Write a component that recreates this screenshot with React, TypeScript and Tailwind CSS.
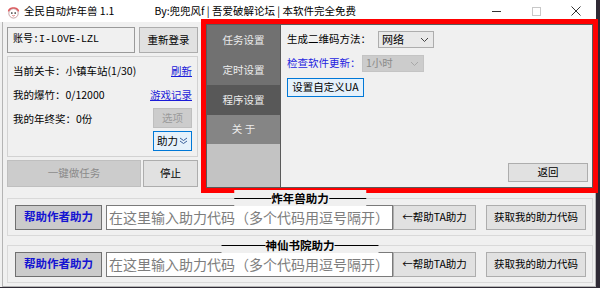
import React from "react";

const Face = () => (
	<svg width="15" height="15" viewBox="0 0 16 16">
		<path d="M2 8 C2 2 14 2 14 8 Z" fill="#e2575b" />
		<circle cx="8" cy="10" r="5" fill="#fff" stroke="#b5858a" strokeWidth="0.8" />
		<circle cx="6.2" cy="9.6" r="0.9" fill="#222" />
		<circle cx="9.8" cy="9.6" r="0.9" fill="#222" />
		<path d="M6.8 12.2 Q8 13.2 9.2 12.2" stroke="#c33" strokeWidth="0.8" fill="none" />
	</svg>
);

const Chevron = ({ color }: { color: string }) => (
	<svg width="9" height="6" viewBox="0 0 9 6">
		<path d="M1 1 L4.5 4.5 L8 1" stroke={color} strokeWidth="1" fill="none" />
	</svg>
);

const DoubleDown = () => (
	<svg width="9" height="8" viewBox="0 0 9 8">
		<path d="M1 1 L4.5 3.5 L8 1 M1 4 L4.5 6.5 L8 4" stroke="#3a5f9a" strokeWidth="1" fill="none" />
	</svg>
);

const tabs = [
	{ label: "任务设置", cls: "bg-[#717171] h-[30px]" },
	{ label: "定时设置", cls: "bg-[#717171] h-[30px]" },
	{ label: "程序设置", cls: "bg-[#585858] h-[30px]" },
	{ label: "关 于", cls: "bg-[#858585] h-[29px]" },
];

const HelpGroup = ({ title, dash }: { title: string; dash: string }) => (
	<div className="relative w-[586px] h-[38px] border border-[#d9d9d9] flex items-center pl-[7px]">
		<div className="absolute -top-[9px] left-1/2 -translate-x-1/2 flex items-center bg-[#f0f0f0] leading-[16px] font-bold text-[11.5px]">
			<span className={`inline-block h-px bg-black ${dash}`}></span>
			<span>{title}</span>
			<span className={`inline-block h-px bg-black ${dash}`}></span>
		</div>
		<button className="w-[87px] h-[25px] bg-[#cbcbcb] border border-[#707070] text-[#1414d2] font-bold text-[11.5px]">
			帮助作者助力
		</button>
		<input
			className="ml-[4px] w-[287px] h-[25px] bg-white border border-[#7a7a7a] px-[2px] text-[14px] placeholder:text-[#7d7d7d] outline-none"
			placeholder="在这里输入助力代码（多个代码用逗号隔开）"
		/>
		<button className="w-[83px] h-[25px] bg-[#e1e1e1] border border-[#adadad]">←帮助TA助力</button>
		<button className="ml-[10px] w-[100px] h-[25px] bg-[#e1e1e1] border border-[#adadad]">获取我的助力代码</button>
	</div>
);

export default function App() {
	return (
		<div className="relative w-[600px] h-[288px] bg-[#2f2a35] overflow-hidden font-['Noto_Sans_CJK_SC',sans-serif] text-[10.5px] text-black leading-none">
			<div className="w-[596px] h-[287px] bg-[#f0f0f0] flex flex-col">
				{/* title bar */}
				<div className="h-[22px] shrink-0 bg-white flex items-center">
					<div className="w-[24px] flex justify-center pl-[2px]">
						<Face />
					</div>
					<span>全民自动炸年兽 1.1</span>
					<span className="ml-[40px]">By:兜兜风f | 吾爱破解论坛 | 本软件完全免费</span>
					<div className="ml-auto flex h-full">
						<div className="w-[40px] flex items-center justify-center">
							<span className="block w-[9px] h-px bg-[#333]"></span>
						</div>
						<div className="w-[40px] flex items-center justify-center">
							<span className="block w-[9px] h-[9px] border border-[#c8c8c8]"></span>
						</div>
						<div className="w-[40px] flex items-center justify-center">
							<svg width="10" height="10" viewBox="0 0 10 10">
								<path d="M0.5 0.5 L9.5 9.5 M9.5 0.5 L0.5 9.5" stroke="#333" strokeWidth="1" />
							</svg>
						</div>
					</div>
				</div>

				{/* body */}
				<div className="flex-1 ml-[2px] w-[594px] border-x border-b border-[#b4b4b4] pl-[4px] pt-[5px]">
					<div className="flex items-start">
						{/* left column */}
						<div className="w-[191px] shrink-0 flex flex-col">
							<div className="flex h-[26px] gap-[4px]">
								<div className="w-[128px] border border-[#9a9a9a] flex items-center pl-[5px] font-['Liberation_Mono','Noto_Sans_CJK_SC',monospace] text-[10px]">
									账号:I-LOVE-LZL
								</div>
								<button className="w-[59px] bg-[#e1e1e1] border border-[#adadad]">重新登录</button>
							</div>
							<div className="mt-[3px] h-[101px] border border-[#d2d2d2] flex flex-col pl-[5px] pr-[5px]">
								<div className="mt-[9px] flex items-center justify-between">
									<span>当前关卡：小镇车站(1/30)</span>
									<span className="text-[#1b1bd8] underline">刷新</span>
								</div>
								<div className="mt-[13px] flex items-center justify-between">
									<span>我的爆竹：0/12000</span>
									<span className="text-[#1b1bd8] underline">游戏记录</span>
								</div>
								<div className="mt-[8px] flex items-center justify-between">
									<span className="mt-[2px]">我的年终奖：0份</span>
									<button className="w-[39px] h-[20px] bg-[#cccccc] border border-[#bfbfbf] text-[#9a9a9a]">选项</button>
								</div>
								<div className="mt-[3px] flex justify-end">
									<button className="w-[39px] h-[20px] bg-[#e5f1fb] border border-[#0078d7] flex items-center justify-center gap-[1px]">
										助力
										<DoubleDown />
									</button>
								</div>
							</div>
							<div className="mt-[3px] flex h-[27px] gap-[2px]">
								<button className="w-[134px] bg-[#cccccc] border border-[#bfbfbf] text-[#8a8a8a]">一键做任务</button>
								<button className="w-[55px] bg-[#e1e1e1] border border-[#adadad]">停止</button>
							</div>
						</div>

						{/* settings panel (highlighted) */}
						<div className="ml-[3px] -mt-[8px] w-[397px] h-[174px] shrink-0 border-[5px] border-[#ff0000]">
							<div className="w-full h-full border border-[#5a5a5a] flex">
								<div className="w-[74px] flex flex-col border-r border-[#5a5a5a] bg-[#c3c3c3]">
									{tabs.map((t) => (
										<div key={t.label} className={`${t.cls} flex items-center justify-center text-[#ececec]`}>
											{t.label}
										</div>
									))}
								</div>
								<div className="flex-1 bg-[#f0f0f0] flex flex-col pl-[6px] pt-[6px]">
									<div className="flex items-center h-[17px]">
										<span className="w-[91px]">生成二维码方法：</span>
										<div className="w-[56px] h-[17px] bg-[#e9e9e9] border border-[#adadad] flex items-center justify-between pl-[3px] pr-[4px] text-[11px]">
											网络
											<Chevron color="#444" />
										</div>
									</div>
									<div className="mt-[7px] flex items-center h-[17px]">
										<span className="w-[75px] text-[#1f1fe0]">检查软件更新：</span>
										<div className="w-[62px] h-[17px] bg-[#cccccc] border border-[#c4c4c4] flex items-center justify-between pl-[3px] pr-[4px] text-[#8a8a8a]">
											1小时
											<Chevron color="#a8a8a8" />
										</div>
									</div>
									<button className="mt-[6px] w-[77px] h-[19px] bg-[#e5f1fb] border border-[#0078d7]">设置自定义UA</button>
									<button className="mt-auto self-end mr-[4px] mb-[5px] w-[80px] h-[19px] bg-[#e1e1e1] border border-[#adadad]">
										返回
									</button>
								</div>
							</div>
						</div>
					</div>

					{/* help groups */}
					<div className="mt-[5px]">
						<HelpGroup title="炸年兽助力" dash="w-[37px]" />
					</div>
					<div className="mt-[9px]">
						<HelpGroup title="神仙书院助力" dash="w-[44px]" />
					</div>
				</div>
			</div>
		</div>
	);
}
